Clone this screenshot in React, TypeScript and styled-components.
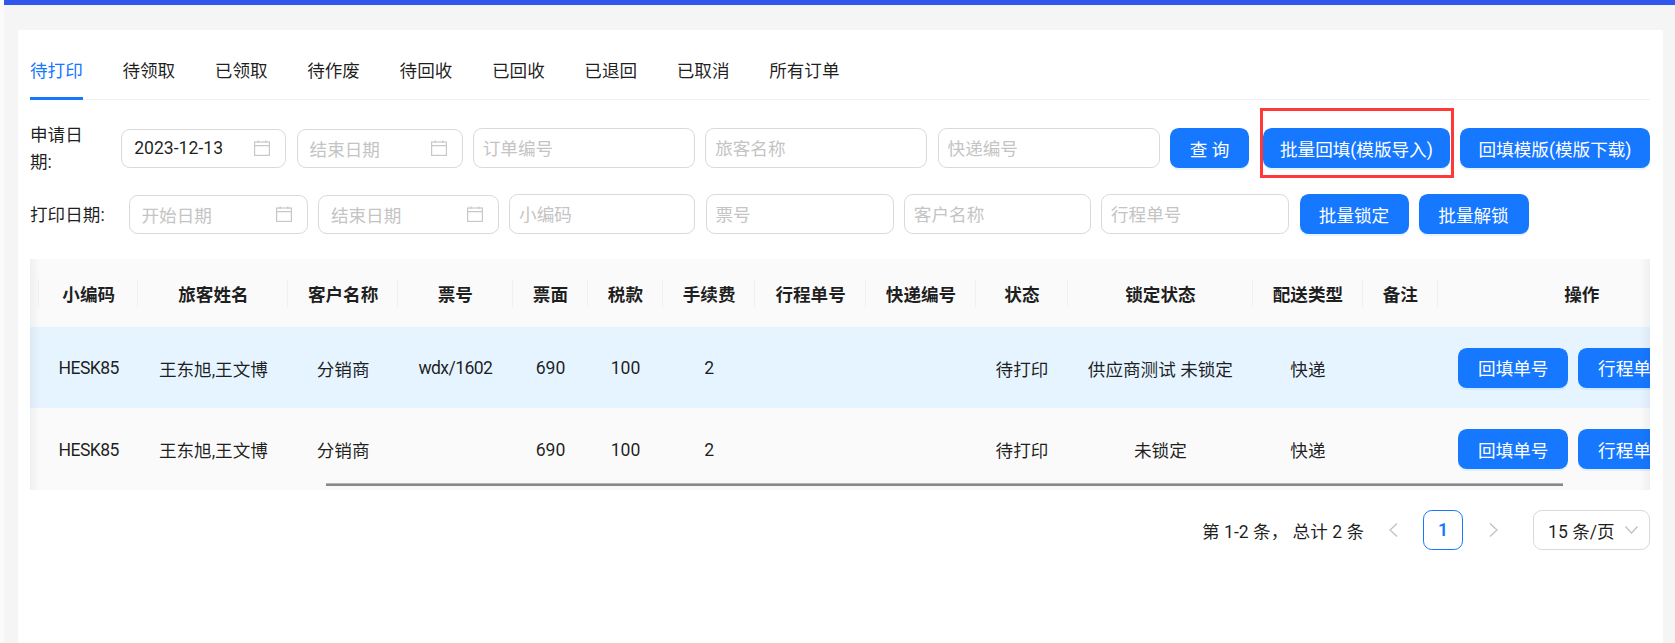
import React from "react";
import styled, { createGlobalStyle } from "styled-components";

const Global = createGlobalStyle`
  html, body { margin: 0; padding: 0; background: #f5f5f5; height: 100%; overflow: hidden; }
  #root { height: 100%; }
  * { box-sizing: border-box; }
  body { font-family: Roboto, "Noto Sans CJK SC", sans-serif; font-size: 17.6px; color: rgba(0,0,0,.88); }
`;

const Page = styled.div`
  height: 643px;
  display: flex;
  flex-direction: column;
  border-top: 5px solid #3056eb;
  background: #f5f5f5;
`;
const Main = styled.main`
  flex: 1;
  margin: 25px 12px 0 18px;
  background: #fff;
  padding: 0 13px 0 12px;
  position: relative;
`;
const LeftEdge = styled.div`
  position: absolute;
  left: -18px;
  top: -30px;
  bottom: 0;
  width: 4px;
  background: #fafafa;
`;
const Tabs = styled.nav`
  height: 70px;
  display: flex;
  gap: 39.6px;
  border-bottom: 1.5px solid #f0f0f0;
`;
const Tab = styled.div<{ $active?: boolean }>`
  height: 70px;
  padding-top: 22px;
  line-height: 39px;
  width: 52.8px;
  white-space: nowrap;
  color: ${(p) => (p.$active ? "#1677ff" : "rgba(0,0,0,.88)")};
  border-bottom: ${(p) => (p.$active ? "3px solid #1677ff" : "none")};
`;
const FilterRow = styled.div<{ $top: number }>`
  display: flex;
  align-items: center;
  height: 40px;
  margin-top: ${(p) => p.$top}px;
`;
const Label = styled.div<{ $w: number; $gap: number }>`
  width: ${(p) => p.$w}px;
  margin-right: ${(p) => p.$gap}px;
  margin-top: 2px;
  flex: none;
  line-height: 27px;
`;
const Field = styled.input<{ $w: number }>`
  width: ${(p) => p.$w}px;
  height: 40px;
  flex: none;
  margin-right: 10.4px;
  border: 1px solid #d9d9d9;
  border-radius: 8.8px;
  padding: 1px 8.8px 0;
  font: inherit;
  color: rgba(0,0,0,.88);
  background: #fff;
  outline: none;
  &::placeholder { color: #c4c4c4; opacity: 1; }
`;
const DateBox = styled.div<{ $w: number; $filled?: boolean }>`
  width: ${(p) => p.$w}px;
  height: 39px;
  flex: none;
  margin-right: 10.4px;
  display: flex;
  align-items: center;
  justify-content: space-between;
  border: 1px solid #d9d9d9;
  border-radius: 8.8px;
  padding: 0 15px 0 12px;
  color: ${(p) => (p.$filled ? "rgba(0,0,0,.88)" : "#c4c4c4")};
  svg { flex: none; }
`;
const Btn = styled.button<{ $w?: number; $mr?: number }>`
  width: ${(p) => (p.$w ? `${p.$w}px` : "auto")};
  height: 40px;
  flex: none;
  margin-right: ${(p) => p.$mr ?? 10}px;
  padding: 0;
  border: 0;
  border-radius: 8.8px;
  background: #1677ff;
  color: #fff;
  font: inherit;
  white-space: nowrap;
  box-shadow: 0 2px 0 rgba(5,145,255,.1);
`;
const Highlighted = styled.div`
  position: relative;
  flex: none;
  margin-right: 10px;
`;
const RedBox = styled.div`
  position: absolute;
  left: -2.7px;
  right: -3.8px;
  top: -20px;
  bottom: -10px;
  border: 3px solid #ff3838;
  pointer-events: none;
`;
const TableWrap = styled.div`
  position: relative;
  height: 231px;
  margin-top: 25px;
  overflow: hidden;
  background: #fafafa;
`;
const Table = styled.table`
  table-layout: fixed;
  border-collapse: separate;
  border-spacing: 0;
  width: 1695.3px;
`;
const Th = styled.th`
  height: 68px;
  padding: 0;
  text-align: center;
  font-weight: 600;
  font-size: 17.6px;
  background: #fafafa;
  position: relative;
  &::before {
    content: "";
    position: absolute;
    right: 0;
    top: 20px;
    height: 28px;
    width: 1px;
    background: #f0f0f0;
  }
  &:last-child::before { display: none; }
`;
const Tr = styled.tr<{ $selected?: boolean; $h: number }>`
  height: ${(p) => p.$h}px;
  background: ${(p) => (p.$selected ? "#e6f4ff" : "#fafafa")};
`;
const Td = styled.td`
  padding: 1px 0 0;
  text-align: center;
  white-space: nowrap;
`;
const CodeCell = styled(Td)`
  letter-spacing: -0.6px;
`;
const ActionCell = styled.td`
  padding: 0 0 0 20.5px;
  text-align: left;
  white-space: nowrap;
`;
const EdgeShade = styled.div<{ $side: "left" | "right" }>`
  position: absolute;
  top: 0;
  bottom: 0;
  ${(p) => p.$side}: 0;
  width: 10px;
  pointer-events: none;
  background: linear-gradient(to ${(p) => (p.$side === "left" ? "right" : "left")}, rgba(5,5,5,.045), rgba(5,5,5,0));
`;
const ScrollThumb = styled.div`
  position: absolute;
  left: 296px;
  bottom: 4px;
  width: 1237px;
  height: 3px;
  background: #888;
  border-top: 1px solid #b4b4b4;
`;
const Pager = styled.div`
  margin-top: 20px;
  height: 40px;
  display: flex;
  align-items: center;
  justify-content: flex-end;
`;
const PagerTotal = styled.div`
  margin-right: 9px;
  white-space: nowrap;
`;
const PagerArrow = styled.div`
  width: 40px;
  height: 40px;
  display: flex;
  align-items: center;
  justify-content: center;
`;
const PagerCurrent = styled.div`
  width: 40px;
  height: 40px;
  margin: 0 10px;
  border: 1px solid #1677ff;
  border-radius: 8.8px;
  color: #1677ff;
  font-weight: 600;
  display: flex;
  align-items: center;
  justify-content: center;
`;
const PageSize = styled.div`
  width: 117px;
  height: 40px;
  margin-left: 20px;
  padding: 0 11px 0 14px;
  border: 1px solid #d9d9d9;
  border-radius: 8.8px;
  display: flex;
  align-items: center;
  justify-content: space-between;
  white-space: nowrap;
`;

const CalendarIcon = () => (
  <svg width="16" height="16" viewBox="0 0 16 16" fill="none" stroke="#c8c8c8" strokeWidth="1.2">
    <rect x="0.6" y="2" width="14.8" height="13.4" />
    <path d="M0.6 5.6H15.4M4.2 0.4V3M11.8 0.4V3" />
  </svg>
);
const Chevron = ({ d, w = 9, h = 14 }: { d: string; w?: number; h?: number }) => (
  <svg width={w} height={h} viewBox={`0 0 ${w} ${h}`} fill="none" stroke="#bfbfbf" strokeWidth="1.2">
    <path d={d} />
  </svg>
);

const tabs = ["待打印", "待领取", "已领取", "待作废", "待回收", "已回收", "已退回", "已取消", "所有订单"];
const cols = [9, 99.4, 150, 109.4, 115.2, 75, 75, 92.4, 110.5, 110.3, 91.6, 185.3, 109.7, 75, 288];
const headers = ["", "小编码", "旅客姓名", "客户名称", "票号", "票面", "税款", "手续费", "行程单号", "快递编号", "状态", "锁定状态", "配送类型", "备注", "操作"];
const rows = [
  { sel: true, h: 81, ticket: "wdx/1602", lock: "供应商测试 未锁定" },
  { sel: false, h: 82, ticket: "", lock: "未锁定" },
];

export default function App() {
  return (
    <Page>
      <Global />
      <Main>
        <LeftEdge />
        <Tabs>
          {tabs.map((t, i) => (
            <Tab key={t} $active={i === 0}>{t}</Tab>
          ))}
        </Tabs>
        <FilterRow $top={28}>
          <Label $w={62} $gap={29.2}>申请日期:</Label>
          <DateBox $w={165} $filled>2023-12-13<CalendarIcon /></DateBox>
          <DateBox $w={166}>结束日期<CalendarIcon /></DateBox>
          <Field $w={222} placeholder="订单编号" />
          <Field $w={222} placeholder="旅客名称" />
          <Field $w={222} placeholder="快递编号" />
          <Btn $w={79} $mr={13.5}>查 询</Btn>
          <Highlighted>
            <Btn $w={187.5} $mr={0}>批量回填(模版导入)</Btn>
            <RedBox />
          </Highlighted>
          <Btn $w={189.8} $mr={0}>回填模版(模版下载)</Btn>
        </FilterRow>
        <FilterRow $top={26}>
          <Label $w={88.5} $gap={10}>打印日期:</Label>
          <DateBox $w={179}>开始日期<CalendarIcon /></DateBox>
          <DateBox $w={181}>结束日期<CalendarIcon /></DateBox>
          <Field $w={186} placeholder="小编码" />
          <Field $w={188} placeholder="票号" />
          <Field $w={186.7} placeholder="客户名称" />
          <Field $w={188} placeholder="行程单号" />
          <Btn $w={109}>批量锁定</Btn>
          <Btn $w={110} $mr={0}>批量解锁</Btn>
        </FilterRow>
        <TableWrap>
          <Table>
            <colgroup>
              {cols.map((w, i) => <col key={i} style={{ width: w }} />)}
            </colgroup>
            <thead>
              <tr>{headers.map((h, i) => <Th key={i}>{h}</Th>)}</tr>
            </thead>
            <tbody>
              {rows.map((r, i) => (
                <Tr key={i} $selected={r.sel} $h={r.h}>
                  <Td />
                  <CodeCell>HESK85</CodeCell>
                  <Td>王东旭,王文博</Td>
                  <Td>分销商</Td>
                  <CodeCell>{r.ticket}</CodeCell>
                  <Td>690</Td>
                  <Td>100</Td>
                  <Td>2</Td>
                  <Td />
                  <Td />
                  <Td>待打印</Td>
                  <Td>{r.lock}</Td>
                  <Td>快递</Td>
                  <Td />
                  <ActionCell>
                    <Btn $w={110}>回填单号</Btn>
                    <Btn $w={110}>行程单号</Btn>
                  </ActionCell>
                </Tr>
              ))}
            </tbody>
          </Table>
          <EdgeShade $side="left" />
          <EdgeShade $side="right" />
          <ScrollThumb />
        </TableWrap>
        <Pager>
          <PagerTotal>第 1-2 条， 总计 2 条</PagerTotal>
          <PagerArrow><Chevron d="M8 0.5L1 7L8 13.5" /></PagerArrow>
          <PagerCurrent>1</PagerCurrent>
          <PagerArrow><Chevron d="M1 0.5L8 7L1 13.5" /></PagerArrow>
          <PageSize>
            15 条/页
            <Chevron w={13} h={8} d="M0.5 0.5L6.5 7L12.5 0.5" />
          </PageSize>
        </Pager>
      </Main>
    </Page>
  );
}
